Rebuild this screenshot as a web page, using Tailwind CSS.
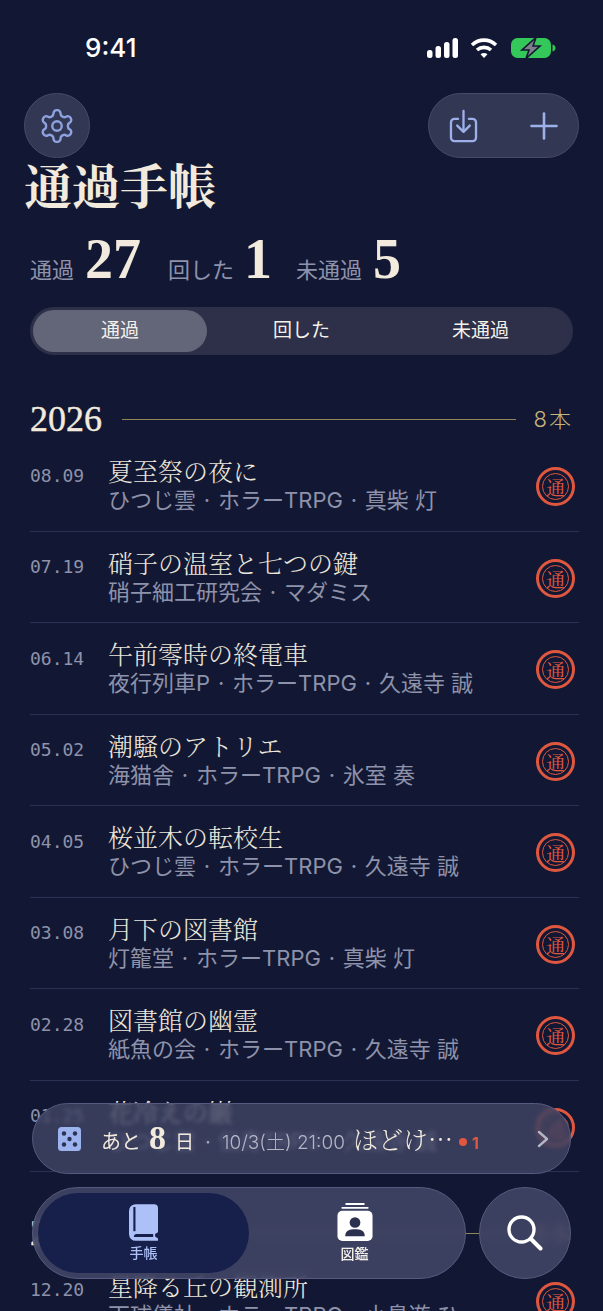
<!DOCTYPE html>
<html lang="ja">
<head>
<meta charset="UTF-8">
<meta name="viewport" content="width=device-width, initial-scale=1.0">
<title>通過手帳</title>
<script src="https://cdn.jsdelivr.net/npm/@tailwindcss/browser@4"></script>
</head>
<body class="bg-[#121833] font-['Inter','Noto_Sans_CJK_JP',sans-serif]">
<div class="relative w-[603px] h-[1311px] overflow-hidden bg-[#121833]">

  <!-- status bar -->
  <div class="flex items-center justify-between h-[93px] pl-[85px] pr-[47px] pt-[3px]">
    <span class="text-[26px] font-medium text-white leading-none">9:41</span>
    <div class="flex items-center">
      <svg class="mr-[12px]" width="31" height="20" viewBox="0 0 31 20" fill="#fff"><rect x="0" y="12" width="5.500" height="8" rx="2.500"/><rect x="8.500" y="8" width="5.500" height="12" rx="2.500"/><rect x="17" y="4" width="5.500" height="16" rx="2.500"/><rect x="25.500" y="0" width="5.500" height="20" rx="2.500"/></svg>
      <svg class="mr-[13px]" width="28" height="22" viewBox="0 0 28 22" fill="none" stroke="#fff" stroke-width="3.600"><path d="M2 8 C9 1.500 19 1.500 26 8"/><path d="M7 13 C11 9.500 17 9.500 21 13"/><path d="M14 21 L10.500 17.200 C12.500 15.700 15.500 15.700 17.500 17.200 Z" fill="#fff" stroke="none"/></svg>
      <svg width="45" height="22" viewBox="0 0 45 22"><rect x="0" y="1" width="40" height="20" rx="6.500" fill="#34c759"/><path d="M41.500 7.500 C43.500 8 44.500 9.500 44.500 11 C44.500 12.500 43.500 14 41.500 14.500 Z" fill="#34c759"/><path d="M25 0.500 L11 13 H18 L15 21.500 L29 9 H22 Z" fill="#7d8089" stroke="#121833" stroke-width="1.600"/></svg>
    </div>
  </div>

  <!-- header buttons -->
  <div class="flex justify-between pl-[24px] pr-[24px]">
    <button class="flex items-center justify-center w-[66px] h-[65px] rounded-full bg-[#323754] border border-[#474b64]">
      <svg width="38" height="38" viewBox="0 0 24 24" fill="none" stroke="#8fa2e0" stroke-width="1.500" stroke-linejoin="round"><path d="M12.220 2h-.44a2 2 0 0 0-2 2v.18a2 2 0 0 1-1 1.730l-.43.25a2 2 0 0 1-2 0l-.15-.08a2 2 0 0 0-2.730.73l-.22.38a2 2 0 0 0 .73 2.730l.15.1a2 2 0 0 1 1 1.720v.51a2 2 0 0 1-1 1.740l-.15.09a2 2 0 0 0-.73 2.730l.22.38a2 2 0 0 0 2.730.73l.15-.08a2 2 0 0 1 2 0l.43.25a2 2 0 0 1 1 1.730V20a2 2 0 0 0 2 2h.44a2 2 0 0 0 2-2v-.18a2 2 0 0 1 1-1.730l.43-.25a2 2 0 0 1 2 0l.15.08a2 2 0 0 0 2.730-.73l.22-.39a2 2 0 0 0-.73-2.730l-.15-.08a2 2 0 0 1-1-1.740v-.5a2 2 0 0 1 1-1.740l.15-.09a2 2 0 0 0 .73-2.730l-.22-.38a2 2 0 0 0-2.730-.73l-.15.08a2 2 0 0 1-2 0l-.43-.25a2 2 0 0 1-1-1.730V4a2 2 0 0 0-2-2z"/><circle cx="12" cy="12" r="3"/></svg>
    </button>
    <div class="flex items-center justify-between w-[151px] h-[65px] pl-[20px] pr-[20px] rounded-full bg-[#323754] border border-[#474b64]">
      <svg width="29" height="34" viewBox="0 0 32 38" fill="none" stroke="#9db0ea" stroke-width="2.600" stroke-linecap="round" stroke-linejoin="round"><path d="M10 11 H6 A4 4 0 0 0 2 15 V32 A4 4 0 0 0 6 36 H26 A4 4 0 0 0 30 32 V15 A4 4 0 0 0 26 11 H22"/><path d="M16 2 V25"/><path d="M9 18.500 L16 25.500 L23 18.500"/></svg>
      <svg width="28" height="28" viewBox="0 0 28 28" fill="none" stroke="#9db0ea" stroke-width="2.600" stroke-linecap="round"><path d="M14 1.500 V26.500"/><path d="M1.500 14 H26.500"/></svg>
    </div>
  </div>

  <main class="px-[30px]">
    <h1 class="-ml-[6px] text-[48px] leading-[52px] font-bold text-[#f2ebdd] font-['Noto_Serif_CJK_JP','Liberation_Serif','Noto_Sans_CJK_JP',serif]">通過手帳</h1>

    <!-- totals -->
    <div class="flex items-baseline h-[56px] mt-[21px] text-[#8e92aa] text-[22px] leading-none">
      <span class="w-[55px]">通過</span>
      <span class="w-[83px] text-[56px] font-bold text-[#f2ebdd] font-['Liberation_Serif',serif]">27</span>
      <span class="w-[76px]">回した</span>
      <span class="w-[52px] text-[56px] font-bold text-[#f2ebdd] font-['Liberation_Serif',serif]">1</span>
      <span class="w-[77px]">未通過</span>
      <span class="text-[56px] font-bold text-[#f2ebdd] font-['Liberation_Serif',serif]">5</span>
    </div>

    <!-- filter -->
    <div class="grid grid-cols-3 items-center w-[543px] h-[48px] mt-[20px] p-[3px] rounded-[24px] bg-[#2d3048] text-[19px] text-[#f4f1ea]">
      <div class="flex items-center justify-center w-[174px] h-[42px] pt-[1px] rounded-[21px] bg-[#636679]">通過</div>
      <div class="pt-[1px] text-center">回した</div>
      <div class="pt-[1px] text-center">未通過</div>
    </div>

    <!-- 2026 -->
    <section class="mt-[46px]">
      <div class="flex items-center h-[36px]">
        <span class="text-[36px] leading-none text-[#f2ebdd] font-['Liberation_Serif',serif] [-webkit-text-stroke:0.4px_#f2ebdd]">2026</span>
        <span class="flex-1 h-[1px] ml-[20px] mr-[18px] bg-[#8f8558]"></span>
        <span class="text-[22px] tracking-[2px] font-light text-[#c9b47b]">8本</span>
      </div>

      <ul class="w-[549px] mt-[3px]">
        <li class="flex items-center h-[91.500px] border-b border-[#2a3153]">
          <span class="w-[79px] -mt-[20px] font-['DejaVu_Sans_Mono',monospace] text-[18px] text-[#8e92aa]">08.09</span>
          <div class="flex-1 -ml-[1px]"><div class="text-[25px] leading-[30px] text-[#ece7dc] font-['Noto_Serif_CJK_JP','Noto_Sans_CJK_JP',serif] font-light">夏至祭の夜に</div><div class="text-[22px] leading-[30px] text-[#8e92aa]">ひつじ雲<span class="inline-block w-[22px] text-center">·</span>ホラーTRPG<span class="inline-block w-[22px] text-center">·</span>真柴 灯</div></div>
          <div class="flex items-center justify-center w-[39px] h-[39px] mr-[4px] mt-[3px] rounded-full border-[3px] border-[#e0573f]"><div class="flex items-center justify-center w-[27px] h-[27px] rounded-full border border-[#e0573f] text-[19px] leading-none text-[#e0573f] font-['Noto_Serif_CJK_JP','Noto_Sans_CJK_JP',serif]">通</div></div>
        </li>
        <li class="flex items-center h-[91.500px] border-b border-[#2a3153]">
          <span class="w-[79px] -mt-[20px] font-['DejaVu_Sans_Mono',monospace] text-[18px] text-[#8e92aa]">07.19</span>
          <div class="flex-1 -ml-[1px]"><div class="text-[25px] leading-[30px] text-[#ece7dc] font-['Noto_Serif_CJK_JP','Noto_Sans_CJK_JP',serif] font-light">硝子の温室と七つの鍵</div><div class="text-[22px] leading-[30px] text-[#8e92aa]">硝子細工研究会<span class="inline-block w-[22px] text-center">·</span>マダミス</div></div>
          <div class="flex items-center justify-center w-[39px] h-[39px] mr-[4px] mt-[3px] rounded-full border-[3px] border-[#e0573f]"><div class="flex items-center justify-center w-[27px] h-[27px] rounded-full border border-[#e0573f] text-[19px] leading-none text-[#e0573f] font-['Noto_Serif_CJK_JP','Noto_Sans_CJK_JP',serif]">通</div></div>
        </li>
        <li class="flex items-center h-[91.500px] border-b border-[#2a3153]">
          <span class="w-[79px] -mt-[20px] font-['DejaVu_Sans_Mono',monospace] text-[18px] text-[#8e92aa]">06.14</span>
          <div class="flex-1 -ml-[1px]"><div class="text-[25px] leading-[30px] text-[#ece7dc] font-['Noto_Serif_CJK_JP','Noto_Sans_CJK_JP',serif] font-light">午前零時の終電車</div><div class="text-[22px] leading-[30px] text-[#8e92aa]">夜行列車P<span class="inline-block w-[22px] text-center">·</span>ホラーTRPG<span class="inline-block w-[22px] text-center">·</span>久遠寺 誠</div></div>
          <div class="flex items-center justify-center w-[39px] h-[39px] mr-[4px] mt-[3px] rounded-full border-[3px] border-[#e0573f]"><div class="flex items-center justify-center w-[27px] h-[27px] rounded-full border border-[#e0573f] text-[19px] leading-none text-[#e0573f] font-['Noto_Serif_CJK_JP','Noto_Sans_CJK_JP',serif]">通</div></div>
        </li>
        <li class="flex items-center h-[91.500px] border-b border-[#2a3153]">
          <span class="w-[79px] -mt-[20px] font-['DejaVu_Sans_Mono',monospace] text-[18px] text-[#8e92aa]">05.02</span>
          <div class="flex-1 -ml-[1px]"><div class="text-[25px] leading-[30px] text-[#ece7dc] font-['Noto_Serif_CJK_JP','Noto_Sans_CJK_JP',serif] font-light">潮騒のアトリエ</div><div class="text-[22px] leading-[30px] text-[#8e92aa]">海猫舎<span class="inline-block w-[22px] text-center">·</span>ホラーTRPG<span class="inline-block w-[22px] text-center">·</span>氷室 奏</div></div>
          <div class="flex items-center justify-center w-[39px] h-[39px] mr-[4px] mt-[3px] rounded-full border-[3px] border-[#e0573f]"><div class="flex items-center justify-center w-[27px] h-[27px] rounded-full border border-[#e0573f] text-[19px] leading-none text-[#e0573f] font-['Noto_Serif_CJK_JP','Noto_Sans_CJK_JP',serif]">通</div></div>
        </li>
        <li class="flex items-center h-[91.500px] border-b border-[#2a3153]">
          <span class="w-[79px] -mt-[20px] font-['DejaVu_Sans_Mono',monospace] text-[18px] text-[#8e92aa]">04.05</span>
          <div class="flex-1 -ml-[1px]"><div class="text-[25px] leading-[30px] text-[#ece7dc] font-['Noto_Serif_CJK_JP','Noto_Sans_CJK_JP',serif] font-light">桜並木の転校生</div><div class="text-[22px] leading-[30px] text-[#8e92aa]">ひつじ雲<span class="inline-block w-[22px] text-center">·</span>ホラーTRPG<span class="inline-block w-[22px] text-center">·</span>久遠寺 誠</div></div>
          <div class="flex items-center justify-center w-[39px] h-[39px] mr-[4px] mt-[3px] rounded-full border-[3px] border-[#e0573f]"><div class="flex items-center justify-center w-[27px] h-[27px] rounded-full border border-[#e0573f] text-[19px] leading-none text-[#e0573f] font-['Noto_Serif_CJK_JP','Noto_Sans_CJK_JP',serif]">通</div></div>
        </li>
        <li class="flex items-center h-[91.500px] border-b border-[#2a3153]">
          <span class="w-[79px] -mt-[20px] font-['DejaVu_Sans_Mono',monospace] text-[18px] text-[#8e92aa]">03.08</span>
          <div class="flex-1 -ml-[1px]"><div class="text-[25px] leading-[30px] text-[#ece7dc] font-['Noto_Serif_CJK_JP','Noto_Sans_CJK_JP',serif] font-light">月下の図書館</div><div class="text-[22px] leading-[30px] text-[#8e92aa]">灯籠堂<span class="inline-block w-[22px] text-center">·</span>ホラーTRPG<span class="inline-block w-[22px] text-center">·</span>真柴 灯</div></div>
          <div class="flex items-center justify-center w-[39px] h-[39px] mr-[4px] mt-[3px] rounded-full border-[3px] border-[#e0573f]"><div class="flex items-center justify-center w-[27px] h-[27px] rounded-full border border-[#e0573f] text-[19px] leading-none text-[#e0573f] font-['Noto_Serif_CJK_JP','Noto_Sans_CJK_JP',serif]">通</div></div>
        </li>
        <li class="flex items-center h-[91.500px] border-b border-[#2a3153]">
          <span class="w-[79px] -mt-[20px] font-['DejaVu_Sans_Mono',monospace] text-[18px] text-[#8e92aa]">02.28</span>
          <div class="flex-1 -ml-[1px]"><div class="text-[25px] leading-[30px] text-[#ece7dc] font-['Noto_Serif_CJK_JP','Noto_Sans_CJK_JP',serif] font-light">図書館の幽霊</div><div class="text-[22px] leading-[30px] text-[#8e92aa]">紙魚の会<span class="inline-block w-[22px] text-center">·</span>ホラーTRPG<span class="inline-block w-[22px] text-center">·</span>久遠寺 誠</div></div>
          <div class="flex items-center justify-center w-[39px] h-[39px] mr-[4px] mt-[3px] rounded-full border-[3px] border-[#e0573f]"><div class="flex items-center justify-center w-[27px] h-[27px] rounded-full border border-[#e0573f] text-[19px] leading-none text-[#e0573f] font-['Noto_Serif_CJK_JP','Noto_Sans_CJK_JP',serif]">通</div></div>
        </li>
        <li class="flex items-center h-[91.500px] border-b border-[#2a3153]">
          <span class="w-[79px] -mt-[20px] font-['DejaVu_Sans_Mono',monospace] text-[18px] text-[#8e92aa]">01.25</span>
          <div class="flex-1 -ml-[1px]"><div class="text-[25px] leading-[30px] text-[#ece7dc] font-['Noto_Serif_CJK_JP','Noto_Sans_CJK_JP',serif] font-light">花冷えの巌</div><div class="text-[22px] leading-[30px] text-[#8e92aa]">ひつじ雲<span class="inline-block w-[22px] text-center">·</span>伝奇TRPG<span class="inline-block w-[22px] text-center">·</span>久遠寺 誠</div></div>
          <div class="flex items-center justify-center w-[39px] h-[39px] mr-[4px] mt-[3px] rounded-full border-[3px] border-[#e0573f]"><div class="flex items-center justify-center w-[27px] h-[27px] rounded-full border border-[#e0573f] text-[19px] leading-none text-[#e0573f] font-['Noto_Serif_CJK_JP','Noto_Sans_CJK_JP',serif]">通</div></div>
        </li>
      </ul>
    </section>

    <!-- 2025 -->
    <section class="mt-[43px]">
      <div class="flex items-center h-[36px]">
        <span class="text-[36px] leading-none text-[#f2ebdd] font-['Liberation_Serif',serif] [-webkit-text-stroke:0.4px_#f2ebdd]">2025</span>
        <span class="flex-1 h-[1px] ml-[20px] mr-[18px] bg-[#8f8558]"></span>
        <span class="text-[22px] tracking-[2px] font-light text-[#c9b47b]">8本</span>
      </div>
      <ul class="w-[549px] mt-[3px]">
        <li class="flex items-center h-[91.500px]">
          <span class="w-[79px] -mt-[20px] font-['DejaVu_Sans_Mono',monospace] text-[18px] text-[#8e92aa]">12.20</span>
          <div class="flex-1 -ml-[1px]"><div class="text-[25px] leading-[30px] text-[#ece7dc] font-['Noto_Serif_CJK_JP','Noto_Sans_CJK_JP',serif] font-light">星降る丘の観測所</div><div class="text-[22px] leading-[30px] text-[#8e92aa]">天球儀社<span class="inline-block w-[22px] text-center">·</span>ホラーTRPG<span class="inline-block w-[22px] text-center">·</span>小鳥遊 ひ</div></div>
          <div class="flex items-center justify-center w-[39px] h-[39px] mr-[4px] mt-[3px] rounded-full border-[3px] border-[#e0573f]"><div class="flex items-center justify-center w-[27px] h-[27px] rounded-full border border-[#e0573f] text-[19px] leading-none text-[#e0573f] font-['Noto_Serif_CJK_JP','Noto_Sans_CJK_JP',serif]">通</div></div>
        </li>
      </ul>
    </section>
  </main>

  <!-- next session bar -->
  <div class="absolute left-[32px] top-[1103px] flex items-center w-[539px] h-[71px] pl-[25px] pr-[21px] rounded-[36px] bg-[#444868]/75 border border-[#555a7e] backdrop-blur-[2px]">
    <svg class="shrink-0" width="23" height="24" viewBox="0 0 23 24"><rect width="23" height="24" rx="3.500" fill="#9db3ee"/><circle cx="6" cy="6.500" r="2.200" fill="#2b3154"/><circle cx="17" cy="6.500" r="2.200" fill="#2b3154"/><circle cx="11.500" cy="12" r="2.200" fill="#2b3154"/><circle cx="6" cy="17.500" r="2.200" fill="#2b3154"/><circle cx="17" cy="17.500" r="2.200" fill="#2b3154"/></svg>
    <div class="flex items-baseline flex-1 ml-[20px] whitespace-nowrap text-[#f2ebdd]">
      <span class="text-[20px]">あと</span>
      <span class="ml-[8px] mr-[9px] text-[34px] leading-none font-bold font-['Liberation_Serif',serif]">8</span>
      <span class="text-[19px]">日</span>
      <span class="w-[28px] text-center text-[19px] text-[#a6a9bd]">·</span>
      <span class="text-[19px] font-light text-[#b4b6c6]">10/3(土) 21:00</span>
      <span class="ml-[8px] text-[25px] font-light font-['Noto_Serif_CJK_JP','Noto_Sans_CJK_JP',serif]">ほどけ…</span>
      <span class="self-center w-[8px] h-[8px] ml-[6px] mt-[7px] rounded-full bg-[#e0573f]"></span>
      <span class="ml-[5px] text-[16px] font-bold text-[#e0573f]">1</span>
    </div>
    <svg class="shrink-0" width="12" height="18" viewBox="0 0 12 18" fill="none" stroke="#b4b6c6" stroke-width="2.400" stroke-linecap="round" stroke-linejoin="round"><path d="M2 2 L10 9 L2 16"/></svg>
  </div>

  <!-- tab bar -->
  <nav class="absolute left-[32px] top-[1187px] flex w-[434px] h-[92px] p-[5px] rounded-[46px] bg-[#444868]/85 border border-[#555a7e] backdrop-blur-[4px]">
    <div class="flex flex-col items-center justify-start w-[211px] h-[80px] pt-[11px] rounded-[40px] bg-[#17204a]">
      <svg width="29" height="37" viewBox="0 0 30 38"><path d="M7 0 H26 A4 4 0 0 1 30 4 V29 L27 31 V33.500 L30 35.500 V38 H7 A7 7 0 0 1 0 31 V7 A7 7 0 0 1 7 0 Z" fill="#aec0f8"/><rect x="4.500" y="3" width="2.200" height="25" fill="#17204a"/><path d="M5 34 A3 3 0 0 1 8 31 H25 V34 H7 Z" fill="#17204a"/></svg>
      <span class="mt-[3px] text-[14px] leading-[18px] font-medium text-[#aec0f8]">手帳</span>
    </div>
    <div class="flex flex-col items-center justify-start flex-1 pt-[10px]">
      <svg width="36" height="38" viewBox="0 0 36 39"><rect x="8" y="0" width="20" height="2" rx="1" fill="#fff"/><rect x="4" y="4" width="28" height="2" rx="1" fill="#fff"/><rect x="0" y="8" width="36" height="31" rx="5" fill="#fff"/><circle cx="18" cy="20" r="5.500" fill="#2d3150"/><path d="M8 34 C8 28 13 27 18 27 C23 27 28 28 28 34 Z" fill="#2d3150"/></svg>
      <span class="mt-[4px] text-[14px] leading-[18px] font-medium text-[#f4f1ea]">図鑑</span>
    </div>
  </nav>

  <button class="absolute left-[479px] top-[1187px] flex items-center justify-center w-[92px] h-[92px] rounded-full bg-[#444868]/85 border border-[#555a7e] backdrop-blur-[4px]">
    <svg width="36" height="36" viewBox="0 0 36 36" fill="none" stroke="#fff" stroke-width="3.400" stroke-linecap="round"><circle cx="14.500" cy="14.500" r="12.500"/><path d="M24 24 L33.500 33.500" stroke-width="4"/></svg>
  </button>
</div>
</body>
</html>
